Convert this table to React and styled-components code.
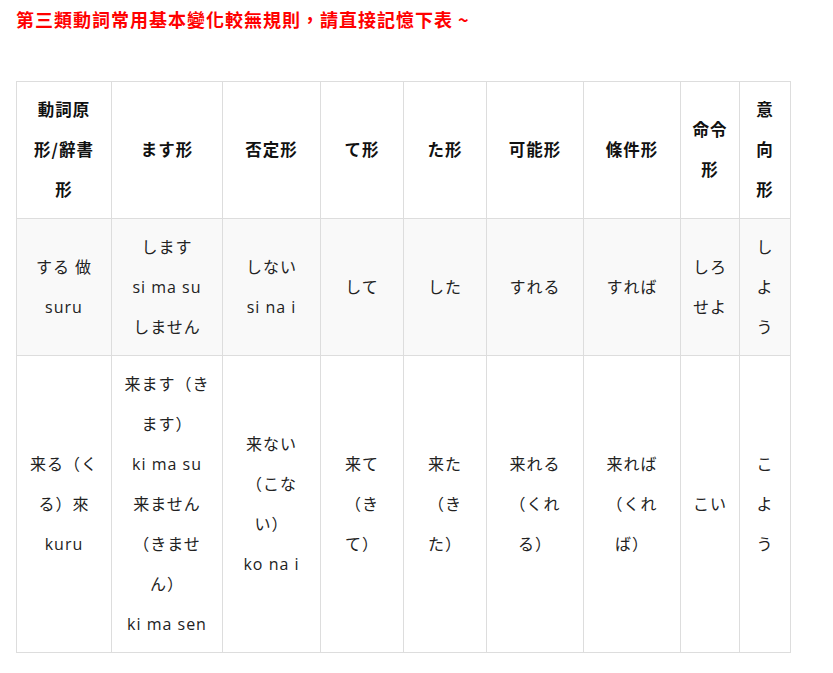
import React from "react";
import styled, { createGlobalStyle } from "styled-components";

const GlobalStyle = createGlobalStyle`
  html, body {
    margin: 0;
    padding: 0;
    background: #ffffff;
  }
  body {
    font-family: "Open Sans", "Noto Sans CJK JP", "Noto Sans CJK TC", sans-serif;
    color: #222222;
    text-spacing-trim: space-all;
  }
`;

const Page = styled.div`
  padding: 7px 16px 20px 16px;
`;

const Title = styled.h3`
  margin: 0;
  font-family: "Noto Sans CJK TC", "Noto Sans CJK JP", sans-serif;
  font-size: 18px;
  line-height: 24px;
  font-weight: 700;
  letter-spacing: 1px;
  color: #ff0000;
  text-spacing-trim: space-all;
`;

const Table = styled.table`
  margin-top: 50px;
  width: 775px;
  table-layout: fixed;
  border-collapse: collapse;
  font-size: 16px;
  letter-spacing: 1px;
  line-height: 40px;
  text-spacing-trim: space-all;
`;

const Col = styled.col`
  width: ${(p) => p.$w}px;
`;

const Row = styled.tr`
  background: ${(p) => (p.$shade ? "#f9f9f9" : "#ffffff")};
`;

const Head = styled.th`
  border: 1px solid #dddddd;
  padding: 7px 10px 9px 10px;
  font-weight: 700;
  font-size: 16.5px;
  text-align: center;
  vertical-align: middle;
  font-family: "Noto Sans CJK JP", "Noto Sans CJK TC", sans-serif;
  color: #111111;
`;

const Cell = styled.td`
  border: 1px solid #dddddd;
  padding: 8px 10px;
  text-align: center;
  vertical-align: middle;
  word-break: normal;
`;

const widths = [95, 111, 98, 83, 83, 97, 97, 59, 51];

const headers = [
  "動詞原形/辭書形",
  "ます形",
  "否定形",
  "て形",
  "た形",
  "可能形",
  "條件形",
  "命令形",
  "意向形",
];

const rows = [
  [
    ["する 做", "suru"],
    ["します", "si ma su", "しません"],
    ["しない", "si na i"],
    ["して"],
    ["した"],
    ["すれる"],
    ["すれば"],
    ["しろせよ"],
    ["しよう"],
  ],
  [
    ["来る（くる）來", "kuru"],
    ["来ます（きます）", "ki ma su", "来ません（きません）", "ki ma sen"],
    ["来ない（こない）", "ko na i"],
    ["来て（きて）"],
    ["来た（きた）"],
    ["来れる（くれる）"],
    ["来れば（くれば）"],
    ["こい"],
    ["こよう"],
  ],
];

const Lines = ({ lines }) =>
  lines.map((line, i) => (
    <React.Fragment key={i}>
      {i > 0 && <br />}
      {line}
    </React.Fragment>
  ));

export default function App() {
  return (
    <>
      <GlobalStyle />
      <Page>
        <Title>第三類動詞常用基本變化較無規則，請直接記憶下表 ~</Title>
        <Table>
          <colgroup>
            {widths.map((w, i) => (
              <Col key={i} $w={w} />
            ))}
          </colgroup>
          <thead>
            <Row>
              {headers.map((h) => (
                <Head key={h}>{h}</Head>
              ))}
            </Row>
          </thead>
          <tbody>
            {rows.map((r, ri) => (
              <Row key={ri} $shade={ri === 0}>
                {r.map((c, ci) => (
                  <Cell key={ci}>
                    <Lines lines={c} />
                  </Cell>
                ))}
              </Row>
            ))}
          </tbody>
        </Table>
      </Page>
    </>
  );
}
